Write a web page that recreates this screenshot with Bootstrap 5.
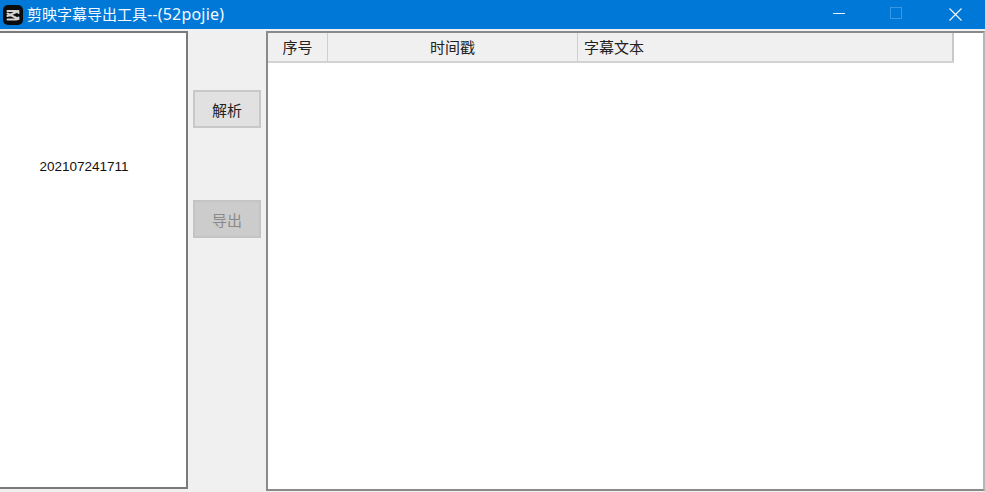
<!DOCTYPE html>
<html lang="zh">
<head>
<meta charset="utf-8">
<title>剪映字幕导出工具--(52pojie)</title>
<link rel="stylesheet" href="https://cdn.jsdelivr.net/npm/bootstrap@5.3.0/dist/css/bootstrap.min.css">
<style>
html,body{height:100%;}
body{background:#f0f0f0;overflow:hidden;font-family:"Noto Sans CJK SC","Liberation Sans",sans-serif;color:#111;}
.win-title{height:29px;background:#0078d7;color:#f4faff;}
.title-text{font-family:"Noto Sans","Noto Sans CJK SC",sans-serif;font-size:15px;line-height:29px;margin-left:4px;white-space:nowrap;}
.title-latin{font-size:16px;letter-spacing:.2px;}
.app-logo{width:20px;height:20px;margin-left:3px;background:#0c0c0c;border-radius:5px;}
.win-btns{margin-left:auto;margin-right:1px;}
.win-btn{width:58px;height:29px;padding-bottom:3px;}
.win-btn-close{padding-bottom:1px;}
.win-btn-max{padding-right:2px;}
.win-body{height:463px;padding-top:2px;}
.file-pane{width:188px;height:458px;background:#fff;border:solid #7a7a7a;border-width:2px 2px 2px 0;padding-top:125px;padding-right:18px;}
.file-name{font-family:"Liberation Sans",sans-serif;font-size:13.5px;line-height:18px;color:#111;}
.action-col{width:78px;padding-left:5px;}
.act-btn{width:68px;height:38px;border:2px solid #c8c8c8;background:#e1e1e1;font-size:15px;line-height:1;color:#222;border-radius:0;padding:0;}
.act-btn.first-btn{margin-top:59px;}
.act-btn.second-btn{margin-top:72px;background:#cccccc;border-color:#c4c4c4;color:#8a8a8a;opacity:1;}
.result-pane{width:719px;height:460px;background:#fff;border:solid #8a8a8a;border-width:2px;border-right-color:#b5b5b5;}
.grid-head{width:686px;height:30px;background:#f0f0f0;border-bottom:2px solid #d2d2d2;font-size:15px;line-height:28px;color:#222;}
.hd-cell{height:28px;border-right:1px solid #cfcfcf;}
.hd-a{width:60px;}
.hd-b{width:250px;}
.hd-c{width:376px;padding-left:6px;border-right:2px solid #c9c9c9;}
</style>
</head>
<body>
<div class="win-title d-flex align-items-center">
  <svg class="app-logo flex-shrink-0" viewBox="0 0 20 20" aria-hidden="true">
    <path d="M4.5 6h8.5c1.8 0 2.5 1 2.5 2M15.5 6 4.5 11M4.5 8.5 15.5 14M4.5 14.5h8.5c1.8 0 2.5-1 2.5-2" fill="none" stroke="#d4d4d4" stroke-width="2" stroke-linecap="round"/>
  </svg>
  <span class="title-text">剪映字幕导出工具<span class="title-latin">--(52pojie)</span></span>
  <div class="win-btns d-flex">
    <div class="win-btn d-flex align-items-center justify-content-center">
      <svg width="12" height="3" viewBox="0 0 12 3"><path d="M0 1.5h12" stroke="#e8f3fc" stroke-width="1"/></svg>
    </div>
    <div class="win-btn win-btn-max d-flex align-items-center justify-content-center">
      <svg width="12" height="12" viewBox="0 0 12 12"><rect x=".5" y=".5" width="11" height="11" fill="none" stroke="#3a98e2" stroke-width="1"/></svg>
    </div>
    <div class="win-btn win-btn-close d-flex align-items-center justify-content-center">
      <svg width="13" height="13" viewBox="0 0 13 13"><path d="M.5.5 12.5 12.5M12.5.5.5 12.5" stroke="#f4faff" stroke-width="1.1"/></svg>
    </div>
  </div>
</div>
<div class="win-body d-flex">
  <div class="file-pane d-flex align-items-start justify-content-center flex-shrink-0">
    <span class="file-name">202107241711</span>
  </div>
  <div class="action-col d-flex flex-column align-items-start flex-shrink-0">
    <button type="button" class="btn act-btn first-btn">解析</button>
    <button type="button" class="btn act-btn second-btn" disabled>导出</button>
  </div>
  <div class="result-pane flex-shrink-0">
    <div class="grid-head d-flex text-center">
      <div class="hd-cell hd-a">序号</div>
      <div class="hd-cell hd-b">时间戳</div>
      <div class="hd-cell hd-c text-start">字幕文本</div>
    </div>
  </div>
</div>
<script src="https://cdn.jsdelivr.net/npm/bootstrap@5.3.0/dist/js/bootstrap.bundle.min.js"></script>
</body>
</html>
